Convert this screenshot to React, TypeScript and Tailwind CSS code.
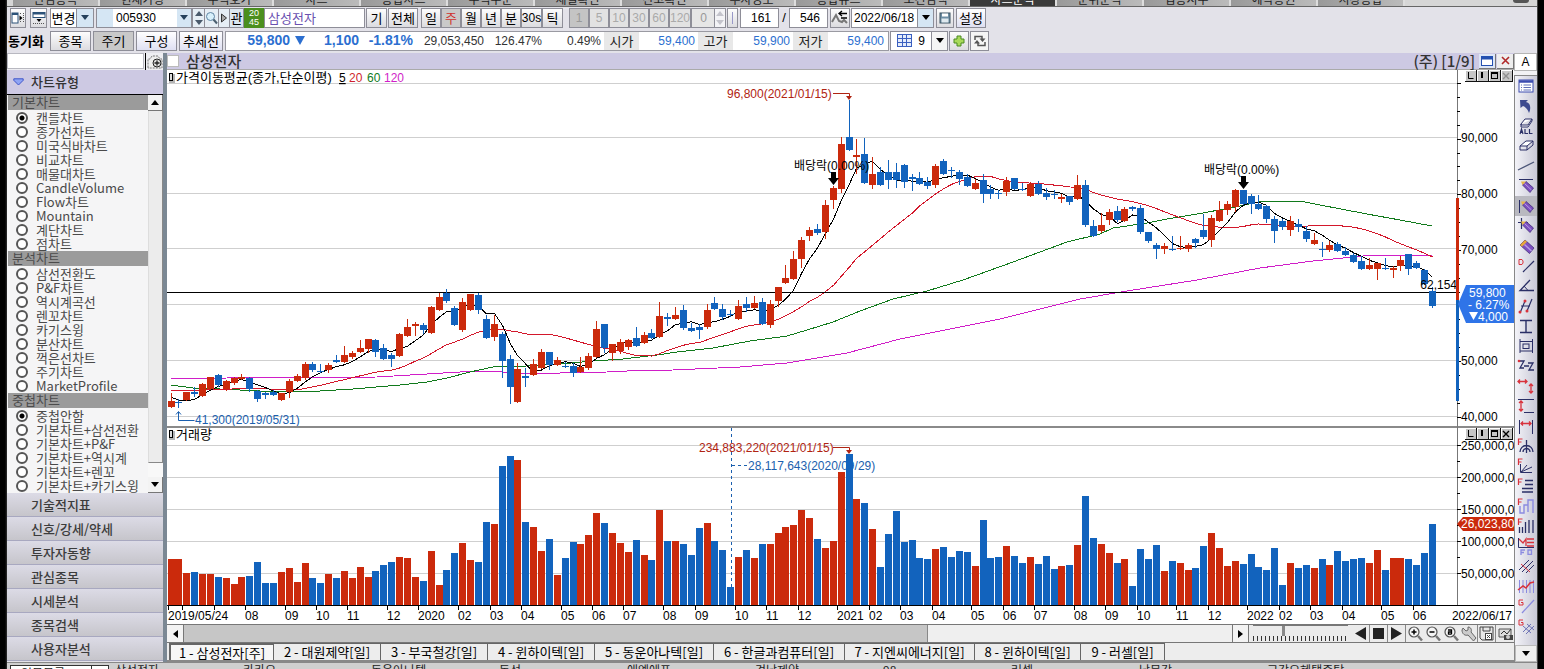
import React from "react";

type Candle = [number, number, number, number, string];

const UI = "font-['Liberation_Sans','Noto_Sans_CJK_KR',sans-serif]";
const KR = "font-['Noto_Sans_CJK_KR',sans-serif]";

const RED = "#cb2a0c";
const BLUE = "#1263bd";

/* high, body top, body bottom, low, direction (u = up, d = down) */
const candles: Candle[] = [
  [393, 401, 407, 407, "u"], [399, 402, 403, 407, "d"], [392, 392, 400, 400, "u"], [387, 392, 394, 396, "d"],
  [383, 384, 396, 396, "u"], [377, 377, 389, 389, "u"], [374, 375, 385, 386, "d"], [380, 381, 389, 390, "u"],
  [377, 378, 383, 384, "u"], [374, 377, 379, 379, "u"], [377, 378, 389, 391, "d"], [390, 391, 399, 401, "d"],
  [392, 393, 395, 398, "d"], [390, 392, 395, 395, "d"], [393, 393, 400, 400, "u"], [379, 381, 392, 397, "u"],
  [374, 376, 381, 381, "u"], [362, 364, 378, 379, "u"], [362, 364, 370, 371, "d"], [364, 371, 372, 372, "d"],
  [363, 365, 370, 372, "u"], [355, 360, 362, 362, "d"], [346, 355, 362, 362, "u"], [351, 353, 357, 358, "u"],
  [340, 348, 352, 352, "u"], [339, 339, 349, 352, "u"], [339, 340, 352, 356, "d"], [344, 348, 359, 359, "d"],
  [353, 355, 359, 366, "d"], [333, 334, 356, 356, "u"], [319, 327, 336, 336, "u"], [322, 324, 326, 335, "u"],
  [323, 325, 330, 333, "d"], [306, 307, 333, 333, "u"], [293, 297, 310, 310, "u"], [289, 293, 301, 302, "d"],
  [306, 308, 325, 325, "d"], [298, 302, 330, 331, "u"], [294, 294, 310, 310, "u"], [293, 295, 310, 313, "d"],
  [315, 319, 338, 338, "d"], [315, 324, 337, 340, "u"], [332, 334, 361, 377, "d"], [355, 359, 387, 403, "d"],
  [363, 369, 402, 402, "u"], [368, 376, 378, 386, "d"], [359, 364, 375, 375, "u"], [349, 352, 368, 368, "u"],
  [352, 352, 365, 369, "d"], [357, 360, 365, 365, "u"], [362, 366, 367, 367, "d"], [363, 366, 373, 376, "d"],
  [357, 367, 372, 372, "u"], [353, 356, 368, 369, "u"], [321, 329, 357, 357, "u"], [324, 324, 348, 352, "d"],
  [344, 344, 353, 360, "u"], [339, 342, 351, 353, "u"], [339, 340, 347, 349, "u"], [327, 338, 346, 346, "d"],
  [332, 335, 343, 343, "u"], [329, 333, 338, 338, "d"], [302, 316, 337, 337, "u"], [313, 317, 319, 325, "d"],
  [307, 315, 319, 319, "u"], [305, 310, 328, 329, "d"], [323, 328, 331, 331, "d"], [324, 327, 330, 338, "d"],
  [304, 310, 327, 328, "u"], [297, 303, 309, 309, "d"], [304, 309, 317, 319, "d"], [310, 314, 315, 316, "d"],
  [300, 306, 319, 319, "u"], [297, 304, 308, 311, "d"], [296, 303, 308, 308, "u"], [298, 302, 324, 324, "d"],
  [300, 304, 325, 327, "u"], [287, 287, 301, 306, "u"], [265, 278, 283, 283, "u"], [251, 259, 279, 279, "u"],
  [237, 240, 259, 267, "u"], [227, 230, 236, 240, "u"], [224, 229, 233, 234, "d"], [200, 205, 232, 238, "u"],
  [186, 188, 200, 208, "u"], [137, 144, 189, 192, "u"], [100, 137, 150, 150, "d"], [139, 155, 157, 173, "u"],
  [138, 154, 183, 183, "d"], [157, 174, 185, 188, "u"], [167, 172, 185, 185, "d"], [160, 172, 180, 188, "d"],
  [163, 172, 180, 187, "d"], [164, 165, 182, 187, "d"], [174, 177, 179, 190, "d"], [172, 178, 184, 184, "d"],
  [177, 182, 186, 188, "d"], [164, 166, 185, 187, "u"], [159, 161, 174, 174, "d"], [167, 170, 171, 177, "d"],
  [170, 172, 179, 184, "d"], [174, 177, 186, 186, "d"], [179, 183, 189, 189, "u"], [174, 180, 194, 202, "d"],
  [185, 189, 194, 198, "d"], [190, 193, 194, 198, "d"], [177, 181, 192, 195, "u"], [178, 178, 189, 189, "d"],
  [183, 189, 190, 190, "d"], [182, 184, 196, 196, "u"], [181, 184, 194, 194, "d"], [188, 193, 197, 199, "d"],
  [190, 194, 195, 198, "d"], [194, 197, 199, 202, "u"], [196, 196, 202, 204, "d"], [175, 185, 199, 199, "u"],
  [180, 185, 225, 226, "d"], [220, 226, 236, 236, "d"], [213, 225, 231, 232, "u"], [209, 212, 220, 224, "u"],
  [206, 211, 220, 221, "d"], [207, 209, 221, 221, "u"], [206, 207, 209, 210, "d"], [205, 208, 232, 233, "d"],
  [232, 232, 241, 242, "d"], [243, 245, 249, 258, "d"], [243, 246, 249, 253, "u"], [236, 249, 250, 250, "d"],
  [236, 248, 249, 249, "u"], [243, 245, 249, 251, "u"], [238, 239, 243, 247, "d"], [214, 230, 237, 238, "d"],
  [215, 218, 240, 246, "u"], [201, 210, 221, 221, "u"], [201, 204, 210, 214, "u"], [189, 190, 207, 211, "u"],
  [190, 190, 204, 204, "d"], [194, 196, 204, 213, "d"], [195, 204, 209, 209, "d"], [205, 206, 219, 222, "d"],
  [216, 219, 231, 242, "d"], [219, 221, 227, 229, "d"], [216, 221, 230, 235, "u"], [219, 224, 227, 231, "d"],
  [226, 231, 239, 241, "d"], [233, 240, 244, 244, "u"], [242, 249, 250, 256, "d"], [241, 245, 250, 251, "u"],
  [242, 244, 251, 251, "d"], [247, 251, 255, 255, "d"], [253, 255, 262, 262, "d"], [256, 261, 269, 269, "d"],
  [258, 265, 269, 269, "u"], [263, 263, 269, 279, "u"], [258, 268, 269, 269, "d"], [266, 268, 270, 277, "u"],
  [256, 260, 266, 270, "u"], [254, 254, 269, 274, "d"], [261, 263, 268, 268, "d"], [269, 270, 284, 284, "d"],
  [287, 291, 306, 307, "d"],
];

/* bar heights in thirds of a pixel, r = rising week, b = falling week */
const volumes =
  "137r 137r 96r 99b 93r 93r 84b 81r 63r 84r 87b 128b 66b 66b 99r 111r 69r 126r 81b 66b 93r 81b 102r 81r 114r 84r 102b 120b 128b 144r 141r 84r 72b 162r 60r 105b 155b 185r 135r 128b 249b 243r 417b 447b 435r 249b 234r 162r 198b 90r 141b 189b 183r 210r 276r 246b 216r 186r 159r 195b 150r 135b 285r 192b 192r 183b 150b 231b 246r 192b 165b 54b 144r 165b 141r 183b 183r 216r 234r 240r 285r 261r 198b 171r 192r 399r 453b 318r 306b 228r 114b 213b 282b 189b 195b 141b 138b 168r 174b 144b 162b 159b 117r 255b 141b 144b 177r 147b 126b 144r 123b 147b 108b 117r 120b 180r 327b 201b 183r 156r 126b 138r 57b 168b 138b 180b 102r 132b 126r 105r 111b 177b 216r 171r 117r 132r 123b 153b 114b 105b 171b 60b 126r 111b 120b 111r 138b 120r 162b 132b 138b 141b 126r 165r 105b 141r 141r 138b 120b 156b 243b"
    .split(" ")
    .map((v) => ({ h: Math.round(parseInt(v, 10) / 3), up: v.endsWith("r") }));

const cx = (i: number) => Math.round(170.5 + i * 7.884);
const closes = candles.map((c) => (c[4] === "u" ? c[1] : c[2]));
const average = (n: number, lead: string) =>
  lead +
  " " +
  closes
    .map((_, i) => (i < n - 1 ? "" : `${cx(i) + 0.5},${(closes.slice(i - n + 1, i + 1).reduce((a, b) => a + b, 0) / n).toFixed(1)}`))
    .filter(Boolean)
    .join(" ");

const months: [number, string][] = [
  [245, "08"], [285, "09"], [316, "10"], [347, "11"], [387, "12"], [418, "2020"], [458, "02"], [490, "03"], [521, "04"],
  [561, "05"], [592, "06"], [623, "07"], [663, "08"], [695, "09"], [735, "10"], [766, "11"], [798, "12"], [837, "2021"],
  [869, "02"], [900, "03"], [932, "04"], [971, "05"], [1003, "06"], [1034, "07"], [1074, "08"], [1105, "09"],
  [1137, "10"], [1176, "11"], [1208, "12"], [1247, "2022"], [1279, "02"], [1310, "03"], [1342, "04"], [1381, "05"], [1413, "06"],
];

function PaneButtons({ y, dim }: { y: number; dim?: boolean }) {
  return (
    <g>
      {[0, 1, 2, 3].map((k) => (
        <g key={k}>
          <rect x={1465 + k * 12} y={y} width="12" height="12" fill="#111" />
          <rect x={1465 + k * 12} y={y} width="11" height="11" fill="#fff" />
          <rect x={1466 + k * 12} y={y + 1} width="10" height="10" fill="#c6c6c6" />
        </g>
      ))}
      <path d={`M1468.5 ${y + 2}v6.5h5`} fill="none" stroke="#000" />
      <path d={`M1482 ${y + 2}v6`} stroke="#000" strokeWidth="2" />
      <rect x="1491.5" y={y + 3.5} width="6" height="5" fill="none" stroke="#000" />
      <path d={`M1491 ${y + 3}h7`} stroke="#000" strokeWidth="2" />
      <path d={`M1503 ${y + 3}l6 6m0-6l-6 6`} stroke={dim ? "#8f8f8f" : "#000"} strokeWidth="1.4" />
    </g>
  );
}

function Chart() {
  const prices: [number, string][] = [[137, "90,000"], [193, "80,000"], [249, "70,000"], [360, "50,000"], [416, "40,000"]];
  const vols: [number, string][] = [[445, "250,000,000"], [477, "200,000,000"], [509, "150,000,000"], [541, "100,000,000"], [573, "50,000,000"]];
  return (
    <svg viewBox="167 70 1347 554" className={`block h-full w-full bg-white text-[12px] ${UI}`} role="img" aria-label="삼성전자 주봉 차트">
      <g stroke="#cfcfcf" shapeRendering="crispEdges">
        {[83, 137, 193, 248, 304, 360, 416, 445, 477, 509, 541, 573].map((y) => (
          <path key={y} d={`M167 ${y}.5H1457`} />
        ))}
      </g>
      <g fill="none" shapeRendering="crispEdges">
        <polyline stroke="#d01ec8" points="171,379 227,378 377,377 460,372 490,371 513,373 560,373 607,372 627,371 673,370 740,367 787,363 817,358 847,353 900,339 940,331 1000,319 1040,309 1080,299 1127,291 1197,280 1260,268 1313,261 1363,256 1407,255 1432,255" />
        <polyline stroke="#117a1c" points="171,385 193,388 220,389 260,391 303,392 353,389 400,385 427,382 447,378 470,372 493,367 527,366 560,364 593,361 623,359 657,355 677,352 713,348 750,341 787,336 807,330 833,322 860,311 893,299 927,291 963,280 1013,262 1067,242 1100,234 1113,228 1147,223 1167,219 1203,213 1240,206 1263,201 1300,201 1320,205 1367,214 1400,220 1432,226" />
        <polyline stroke="#d3172b" points={average(20, "171,390 200,390 232,389 257,388 280,390 302,389")} />
        <polyline stroke="#000" points={average(5, "171,397 178,400 187,401 195,399")} />
        <path d="M167 292.5H1457" stroke="#000" />
      </g>
      <text x="195" y="424" fill="#1b5fae">41,300(2019/05/31)</text>
      <path d="M178.500 412v8.500h16M176 414.500l2.500-3 2.500 3" fill="none" stroke="#1b5fae" />
      <g shapeRendering="crispEdges">
        {candles.map(([hi, top, bot, lo, dir], i) => (
          <g key={i} fill={dir === "u" ? RED : BLUE}>
            <rect x={cx(i)} y={hi} width="1" height={lo - hi + 1} />
            <rect x={cx(i) - 3} y={top} width="7" height={Math.max(1, bot - top)} />
          </g>
        ))}
      </g>
      <text x="727" y="98" fill="#b02412">96,800(2021/01/15)</text>
      <path d="M833 93.500h16.500v4" fill="none" stroke="#b02412" />
      <path d="M846 96h6l-3 4z" fill="#b02412" />
      <text x="794" y="170">배당락(0.00%)</text>
      <path d="M831 172h5v6h3l-5.500 7-5.500-7h3z" />
      <text x="1204" y="174">배당락(0.00%)</text>
      <path d="M1241 176h5v6h3l-5.500 7-5.500-7h3z" />
      <text x="1457" y="289" textAnchor="end">62,154</text>

      <rect x="169" y="74" width="6" height="9" fill="#b5b5b5" />
      <rect x="169.500" y="73.500" width="3" height="7" fill="#ddd" stroke="#000" />
      <text x="176" y="82" className="text-[13px]">가격이동평균(종가,단순이평)</text>
      <text x="339" y="82" textDecoration="underline">5</text>
      <text x="349" y="82" fill="#cf1f2d">20</text>
      <text x="367" y="82" fill="#117a1c">60</text>
      <text x="384" y="82" fill="#d01ec8">120</text>

      <path d="M167 427H1514" stroke="#8a8a8a" strokeWidth="2" />
      <rect x="169" y="431" width="6" height="9" fill="#b5b5b5" />
      <rect x="169.500" y="430.500" width="3" height="7" fill="#ddd" stroke="#000" />
      <text x="176" y="439" className="text-[13px]">거래량</text>
      <path d="M731.500 428V587M732 465.500h15" fill="none" stroke="#1b5fae" strokeDasharray="3 3" shapeRendering="crispEdges" />
      <text x="699" y="452" fill="#b02412">234,883,220(2021/01/15)</text>
      <text x="748" y="470" fill="#1b5fae">28,117,643(2020/09/29)</text>
      <path d="M833 447.500h16.500v4" fill="none" stroke="#b02412" />
      <path d="M846 450h6l-3 4z" fill="#b02412" />
      <g shapeRendering="crispEdges">
        {volumes.map((v, i) => (
          <rect key={i} x={cx(i) - 3} y={605 - v.h} width="7" height={v.h} fill={v.up ? RED : BLUE} />
        ))}
      </g>

      <g stroke="#000" shapeRendering="crispEdges">
        <path d="M167 605.500H1514" />
        {[168, 182, 214, ...months.map((m) => m[0])].map((x) => (
          <path key={x} d={`M${x}.5 605v5`} />
        ))}
        <path d="M1457.500 70V605" stroke="#777" />
        {Array.from({ length: 25 }, (_, k) => 83 + Math.round(k * 13.9)).map((y, k) => (
          <path key={y} d={`M1457 ${y}.5h${k % 4 === 0 ? 4 : 3}`} />
        ))}
        {[445, 461, 477, 493, 509, 525, 541, 557, 573].map((y, k) => (
          <path key={y} d={`M1457 ${y}.5h${k % 2 ? 3 : 4}`} />
        ))}
      </g>
      <rect x="1456" y="198" width="3" height="102" fill={RED} />
      <rect x="1456" y="300" width="3" height="101" fill={BLUE} />
      <text x="168" y="620">2019/05/24</text>
      {months.map(([x, t]) => (
        <text key={x} x={x} y="620">{t}</text>
      ))}
      <text x="1512" y="620" textAnchor="end">2022/06/17</text>
      {prices.map(([y, t]) => (
        <text key={t} x="1461" y={y + 5}>{t}</text>
      ))}
      {vols.map(([y, t]) => (
        <text key={t} x="1461" y={y + 5}>{t}</text>
      ))}
      <path d="M1458 304l8-19h48v38h-48z" fill="#2f74e8" />
      <g fill="#fff">
        <text x="1469" y="297">59,800</text>
        <text x="1468" y="309">- 6.27%</text>
        <path d="M1469 312h9l-4.500 8z" />
        <text x="1478" y="321">4,000</text>
      </g>
      <path d="M1457 524l6-7h51v14h-51z" fill={RED} />
      <text x="1461" y="528" fill="#fff">26,023,80</text>
      <PaneButtons y={70} dim />
      <PaneButtons y={428} />
    </svg>
  );
}

/* ---------- top controls ---------- */

const BTN = "flex h-[20px] shrink-0 items-center justify-center border border-[#8e8e98] text-black";
const RAISED = "bg-linear-to-b from-[#fdfdfd] to-[#dcdce0]";
const PRESSED = "bg-[#c9c9c9]";

function Caret({ up }: { up?: boolean }) {
  return (
    <svg width="8" height="5" viewBox="0 0 8 5" aria-hidden="true">
      <path d={up ? "M0 5h8L4 0z" : "M0 0h8L4 5z"} fill="currentColor" />
    </svg>
  );
}

function Btn({ children, w, cls = RAISED, label }: { children: React.ReactNode; w: string; cls?: string; label?: string }) {
  return (
    <button type="button" aria-label={label} className={`${BTN} ${w} ${cls}`}>
      {children}
    </button>
  );
}

function RowOne() {
  return (
    <div className={`flex h-[21px] shrink-0 items-center pl-[3px] text-[13px] ${KR}`}>
      <Btn w="w-[16px]" label="왼쪽 패널">
        <svg width="14" height="14" viewBox="0 0 14 14"><rect x="1" y="2" width="6" height="10" fill="#fff" stroke="#2d5379" /><path d="M1 3h6" stroke="#2d5379" strokeWidth="2" /><path d="M9.500 2v2m0 6v2m3-10v10" stroke="#555" strokeDasharray="1 1" /><path d="M8.500 4.500v5l3-2.500z" fill="#000" /></svg>
      </Btn>
      <Btn w="w-[17px] ml-[4px]" label="위쪽 패널">
        <svg width="14" height="14" viewBox="0 0 14 14"><rect x="1" y="1.500" width="12" height="5" fill="#fff" stroke="#2d5379" /><path d="M1 2.500h12" stroke="#2d5379" strokeWidth="2" /><path d="M1 12.500h12" stroke="#555" strokeDasharray="1 1" /><path d="M4.500 8h5l-2.500 3z" fill="#000" /></svg>
      </Btn>
      <Btn w="w-[27px] ml-[3px]" cls="bg-white">변경</Btn>
      <Btn w="w-[17px]" cls="bg-[#d5e6f4] !text-[#24405c] border-l-0" label="변경 목록"><Caret /></Btn>
      <span className="ml-[2px] h-[20px] w-[17px] shrink-0 border border-r-0 border-[#8e8e98] bg-[#d5e6f4]" />
      <input aria-label="종목코드" defaultValue="005930" className={`h-[20px] w-[64px] shrink-0 border border-x-0 border-[#8e8e98] bg-white pl-[3px] text-[12px] ${UI}`} />
      <Btn w="w-[15px]" cls="bg-[#d5e6f4] !text-[#24405c] border-l-0" label="종목 목록"><Caret /></Btn>
      <Btn w="w-[13px] flex-col gap-[4px]" cls="bg-[#e6eef5] !text-[#4a5a6c]" label="종목 이동"><Caret up /><Caret /></Btn>
      <Btn w="w-[14px]" cls="bg-[#e6eef5] border-l-0" label="검색">
        <svg width="13" height="14" viewBox="0 0 13 14"><circle cx="5.500" cy="5.500" r="4" fill="#d8f0fb" stroke="#5d84a3" /><path d="M8.500 8.500l3.500 4" stroke="#4c6070" strokeWidth="2" /></svg>
      </Btn>
      <Btn w="w-[11px]" cls="bg-[#e6eef5] border-l-0" label="다음"><svg width="6" height="10" viewBox="0 0 6 10"><path d="M.5 1v8l5-4z" fill="#aaa" stroke="#333" /></svg></Btn>
      <Btn w="w-[14px]" cls="bg-[#dce7f0] border-l-0">관</Btn>
      <span className="flex h-[20px] w-[20px] shrink-0 flex-col items-center justify-center bg-[#4b8f1e] font-['Liberation_Sans',sans-serif] text-[9px] leading-[9px] text-white"><b className="font-normal">20</b><b className="font-normal">45</b></span>
      <input aria-label="종목명" defaultValue="삼성전자" className="h-[20px] w-[101px] shrink-0 border border-[#8e8e98] bg-white pl-[3px] text-[13px] text-[#6a50b0]" />
      <Btn w="w-[21px] ml-[1px]">기</Btn>
      <Btn w="w-[30px] ml-[1px]">전체</Btn>
      <div className="ml-[3px] flex shrink-0">
        <Btn w="w-[20px]">일</Btn>
        <Btn w="w-[20px]" cls="bg-[#c9c9c9] !text-[#d0302c]">주</Btn>
        <Btn w="w-[20px]">월</Btn>
        <Btn w="w-[20px]">년</Btn>
        <Btn w="w-[20px]">분</Btn>
        <Btn w="w-[21px]"><span className={`text-[12px] ${UI}`}>30s</span></Btn>
        <Btn w="w-[21px]">틱</Btn>
      </div>
      <div className={`ml-[6px] flex shrink-0 text-[12px] ${UI}`}>
        <Btn w="w-[20px]" cls="bg-[#c4c4c4] !text-[#999]">1</Btn>
        <Btn w="w-[20px]" cls="bg-[#e2e2e2] !text-[#aaa]">5</Btn>
        <Btn w="w-[20px]" cls="bg-[#e2e2e2] !text-[#aaa]">10</Btn>
        <Btn w="w-[20px]" cls="bg-[#e2e2e2] !text-[#aaa]">30</Btn>
        <Btn w="w-[20px]" cls="bg-[#e2e2e2] !text-[#aaa]">60</Btn>
        <Btn w="w-[22px]" cls="bg-[#e2e2e2] !text-[#aaa]">120</Btn>
        <input aria-label="분 간격" disabled defaultValue="0" className="h-[20px] w-[24px] border border-[#8e8e98] bg-[#e6e6e6] pr-[7px] text-right text-[#999]" />
        <Btn w="w-[11px]" cls="bg-[#f3f3f6] !text-[#c4c4cc] flex-col gap-[4px] border-l-0" label="간격 조절"><Caret up /><Caret /></Btn>
        <Btn w="w-[11px] ml-[1px]" label="구분"><span className="h-[12px] w-px bg-[#9898c8]" /></Btn>
      </div>
      <input aria-label="표시 봉 수" defaultValue="161" className={`ml-[2px] h-[20px] w-[39px] shrink-0 border border-[#8e8e98] bg-white pr-[7px] text-right text-[12px] ${UI}`} />
      <span className={`w-[10px] shrink-0 text-center ${UI}`}>/</span>
      <input aria-label="전체 봉 수" defaultValue="546" className={`h-[20px] w-[39px] shrink-0 border border-[#8e8e98] bg-white pr-[7px] text-right text-[12px] ${UI}`} />
      <Btn w="w-[20px] ml-[2px]" label="추세 비교">
        <svg width="18" height="16" viewBox="0 0 18 16"><path d="M1 12l4-7 3 6 3 1 2-2 3 3" fill="none" stroke="#777" strokeWidth="2" /><path d="M16 3.500H8m3-2.500L8 3.500 11 6M10 8h6" fill="none" stroke="#000" strokeWidth="1.300" /></svg>
      </Btn>
      <input aria-label="기준일" defaultValue="2022/06/18" className={`ml-px h-[20px] w-[67px] shrink-0 border border-[#8e8e98] bg-white pl-[2px] text-[12px] ${UI}`} />
      <Btn w="w-[16px]" cls="bg-[#d5e6f4] border-l-0" label="날짜 선택"><Caret /></Btn>
      <Btn w="w-[18px] ml-[2px]" label="저장">
        <svg width="12" height="12" viewBox="0 0 12 12"><rect x="1" y="1" width="10" height="10" fill="#6e8fa5" stroke="#3d5360" /><rect x="3" y="1.500" width="6" height="3" fill="#fff" /><rect x="2.500" y="6.500" width="7" height="4" fill="#dfe9ee" /></svg>
      </Btn>
      <Btn w="w-[30px] ml-[2px]" cls="bg-linear-to-b from-white to-[#dfe0f2]">설정</Btn>
    </div>
  );
}

function RowTwo() {
  const label = "flex h-[18px] items-center justify-center bg-[#e8e8e8] w-[35px] text-[13px] text-[#222]";
  const strong = "text-[14px] font-bold text-[#2c6fd0]";
  return (
    <div className={`mt-[2px] flex h-[21px] shrink-0 items-center pl-px text-[13px] ${KR}`}>
      <span className="w-[42px] shrink-0 font-bold">동기화</span>
      <Btn w="w-[41px]">종목</Btn>
      <Btn w="w-[41px] ml-[2px]" cls={PRESSED}>주기</Btn>
      <Btn w="w-[41px] ml-[2px]" cls="bg-linear-to-b from-white to-[#dfe0f2]">구성</Btn>
      <Btn w="w-[44px] ml-[2px]" cls="bg-linear-to-b from-white to-[#dfe0f2]">추세선</Btn>
      <div className="ml-[2px] flex h-[20px] w-[664px] shrink-0 items-center border border-[#9a9aa2] bg-white text-[12px] text-[#333]">
        <span className={`flex w-[79px] items-center justify-end gap-[5px] ${strong} ${UI}`}>59,800
          <svg width="10" height="9" viewBox="0 0 10 9"><path d="M0 0h10L5 9z" fill="#2c6fd0" /></svg>
        </span>
        <span className={`w-[54px] text-right ${strong} ${UI}`}>1,100</span>
        <span className={`w-[54px] text-right ${strong} ${UI}`}>-1.81%</span>
        <span className={`w-[71px] text-right ${UI}`}>29,053,450</span>
        <span className={`w-[58px] text-right ${UI}`}>126.47%</span>
        <span className={`w-[59px] text-right ${UI}`}>0.49%</span>
        <span className={`ml-[3px] ${label}`}>시가</span>
        <span className={`w-[56px] text-right text-[#2c6fd0] ${UI}`}>59,400</span>
        <span className={`ml-[3px] ${label}`}>고가</span>
        <span className={`w-[57px] text-right text-[#2c6fd0] ${UI}`}>59,900</span>
        <span className={`ml-[3px] ${label}`}>저가</span>
        <span className={`w-[56px] text-right text-[#2c6fd0] ${UI}`}>59,400</span>
      </div>
      <button type="button" className={`${BTN} ml-px w-[42px] gap-[6px] bg-white`}>
        <svg width="15" height="14" viewBox="0 0 15 14"><rect x=".5" y=".5" width="14" height="12" fill="#e4ecfb" stroke="#3a5fc0" /><path d="M5.500 0v13m4-13v13M0 4.500h15M0 8.500h15" stroke="#3a5fc0" /></svg>
        <span className={`text-[12px] ${UI}`}>9</span>
      </button>
      <Btn w="w-[16px]" cls="bg-[#f5f5f5] border-l-0" label="분할 목록"><Caret /></Btn>
      <Btn w="w-[20px] ml-px" label="추가">
        <svg width="12" height="12" viewBox="0 0 12 12"><path d="M4 1h4v3h3v4H8v3H4V8H1V4h3z" fill="#a8da5a" stroke="#4a8a20" /></svg>
      </Btn>
      <Btn w="w-[19px] ml-px" cls="bg-[#f5f5f5]" label="새로고침">
        <svg width="14" height="14" viewBox="0 0 14 14"><path d="M2 6V2.500h7V5M12 8v3.500H5V9" fill="none" stroke="#555" strokeWidth="1.500" /><path d="M6.500 4.500h6L9.500 8zM1 9.500h6L4 6z" fill="#555" /></svg>
      </Btn>
    </div>
  );
}

/* ---------- left panel ---------- */

const groups = [
  { title: "기본차트", picked: 0, items: ["캔들차트", "종가선차트", "미국식바차트", "비교차트", "매물대차트", "CandleVolume", "Flow차트", "Mountain", "계단차트", "점차트"] },
  { title: "분석차트", picked: -1, items: ["삼선전환도", "P&F차트", "역시계곡선", "렌꼬차트", "카기스윙", "분산차트", "꺽은선차트", "주기차트", "MarketProfile"] },
  { title: "중첩차트", picked: 0, items: ["중첩안함", "기본차트+삼선전환", "기본차트+P&F", "기본차트+역시계", "기본차트+렌꼬", "기본차트+카기스윙"] },
];

function Sidebar() {
  return (
    <aside className={`flex w-[156px] shrink-0 flex-col text-[13px] ${KR}`}>
      <div className="flex h-[17px] shrink-0 bg-[#eeeef2]">
        <input aria-label="차트 검색" className="h-[16px] w-[137px] border border-[#b8b8c0] bg-white" />
        <span className="ml-px h-[17px] w-px bg-black" />
        <button type="button" aria-label="찾기" className="flex flex-1 items-center justify-center">
          <svg width="16" height="14" viewBox="0 0 16 14"><path d="M1 12.500V4h2l2-3h6l2 3h2v9H1z" fill="#eee" stroke="#777" strokeDasharray="2 1" /><circle cx="10" cy="8" r="4" fill="#ddd" stroke="#222" /><path d="M7.500 8h5M10 5.500v5" stroke="#222" strokeWidth="1.300" /></svg>
        </button>
      </div>
      <button type="button" className="flex h-[24px] shrink-0 items-center gap-[7px] bg-[#cdc9e3] pl-[6px] font-medium text-[#333]">
        <svg width="11" height="8" viewBox="0 0 11 8"><path d="M.8.800h9.400v1.500L5.500 7 .8 2.300z" fill="#8fa4f4" stroke="#3f55c8" /></svg>
        차트유형
      </button>
      <div className="flex shrink-0 border-t border-black bg-[#f5f5f6]">
        <div className="min-w-0 flex-1 pl-px text-[#4a4a4a]">
          {groups.map((g) => (
            <fieldset key={g.title} className="block">
              <legend className="mb-px h-[15px] w-full bg-[#9b9b9b] pl-[4px] leading-[14px] text-[#4c4c4c]">{g.title}</legend>
              {g.items.map((t, i) => (
                <label key={t} className="flex h-[14px] items-center whitespace-nowrap leading-[12px]">
                  <input type="radio" name={g.title} defaultChecked={i === g.picked} className="ml-[8px] mr-[8px] h-[12px] w-[12px] shrink-0 appearance-none rounded-full border-2 border-[#555] bg-white checked:bg-[radial-gradient(circle,#000_0_2px,#fff_3px)]" />
                  {t}
                </label>
              ))}
            </fieldset>
          ))}
        </div>
        <div className="flex w-[15px] flex-col">
          <button type="button" aria-label="위로" className="flex h-[16px] items-center justify-center border-b border-r border-[#777] bg-[#f3f3f3]"><Caret up /></button>
          <div className="flex-1 border-b border-l border-r border-[#888] border-l-[#ddd] bg-[#ececec]" />
          <div className="h-[14px] bg-[#f8f8f8]" />
          <button type="button" aria-label="아래로" className="flex h-[16px] items-center justify-center border-b border-r border-[#777] bg-[#f3f3f3]"><Caret /></button>
        </div>
      </div>
      {["기술적지표", "신호/강세/약세", "투자자동향", "관심종목", "시세분석", "종목검색", "사용자분석"].map((t) => (
        <button key={t} type="button" className="flex h-[24px] shrink-0 items-center border-b border-[#a8a8c0] bg-linear-to-b from-[#dcdbe6] to-[#c6c5cb] pl-[24px] font-medium text-[#3c3c3c]">
          {t}
        </button>
      ))}
    </aside>
  );
}

/* ---------- drawing tools ---------- */

const N = "#2a2f66";
const R = "#d8323c";
const P = "#8b8be0";
const pencil = (
  <g>
    <path d="M5.500 8l3.500-3.500 7.500 6.500-3.500 4.500z" fill="#7d4fc0" stroke="#42307a" strokeWidth=".8" />
    <path d="M7.500 6.500l7 6.500" stroke="#b79be6" />
    <path d="M4 4.500l5 0-3.500 3.500z" fill="#e8b84a" />
  </g>
);
const F = <path d="M1.500 8V2h4M1.500 5h3" fill="none" stroke={R} strokeWidth="1.200" />;
const G = <path d="M6 3H2v5h4V5.500H4" fill="none" stroke={R} />;

const tools: [string, React.ReactNode][] = [
  ["목록", <><rect x="2" y="3" width="14" height="12" fill="#fff" stroke="#3c4db0" /><path d="M2 4.500h14" stroke="#3c4db0" strokeWidth="2.500" /><path d="M4 8h1m1.500 0H14M4 10.500h1m1.500 0H14M4 13h1m1.500 0H14" stroke="#6070b8" /></>],
  ["되돌리기", <path d="M3 3h8L9 5c5 1 5 7 3 11-1-3-3-6-6-7L3.500 11z" fill="#3d4a8e" />],
  ["모두 지우기", <><path d="M4 7l4-5h7l-4 6H4zM4 7v3h7l4-6V2" fill="#fff" stroke={N} /><path d="M3 17l1.500-5L6 17m-2.500-1.500h2M8 12v4.500h3M12.500 12v4.500h3" fill="none" stroke={N} strokeWidth="1.200" /></>],
  ["지우기", <><path d="M3 9l6-5h7l-6 5z" fill="#fff" stroke={N} /><path d="M3 9v4h7l6-5V4M10 9v4" fill="none" stroke={N} /></>],
  ["추세선", <path d="M1 13L17 5" stroke="#4b5577" strokeWidth="1.300" />],
  ["수평선", <><path d="M2 2.500h14" stroke={N} />{pencil}</>],
  ["수직선", <><path d="M2.500 3v13" stroke={N} />{pencil}</>],
  ["십자선", <><path d="M4.500 1v11M1 5.500h10" stroke={N} strokeWidth="1.200" />{pencil}</>],
  ["채우기", <><path d="M3 8l5-5 9 8-4.500 5.500z" fill="#7d4fc0" stroke="#42307a" strokeWidth=".8" /><path d="M3 8l5-5 2 1.800-5 5z" fill="#e8a83a" /><path d="M7.500 7.500l7 6.500" stroke="#b79be6" strokeWidth="1.500" /></>],
  ["각도선 D", <><path d="M2 2.500h3l1 1.500v2L5 7.500H2z" fill="none" stroke={R} /><path d="M6 15L17 4" stroke={N} strokeWidth="1.200" /></>],
  ["각도", <><path d="M13 3L3 13.500h14" fill="none" stroke={N} strokeWidth="1.300" /><path d="M7 9l4 4.500" stroke={N} /></>],
  ["채널", <><path d="M3 16L8 4m2 10L15 2M4 9l9 0" stroke={N} strokeWidth="1.200" /><circle cx="3" cy="15" r="1.500" fill={R} /><circle cx="8" cy="4" r="1.500" fill={R} /><circle cx="10" cy="14" r="1.500" fill={R} /></>],
  ["구간", <path d="M3 3.500h12M3 15.500h12M9 4v11" stroke={N} strokeWidth="1.400" />],
  ["사각형", <><path d="M3 2v14M15.500 2v14M3 4.500h12M3 14h12" stroke={N} /><rect x="6" y="7" width="6" height="4.500" fill="none" stroke={N} /></>],
  ["지그재그", <><path d="M2 4h5L3 11h4M11 6h5l-4 7h5M7 9h5" fill="none" stroke={N} strokeWidth="1.300" /><circle cx="2" cy="4" r="1.300" fill={R} /></>],
  ["이동", <><path d="M1 4.500h9M3 2.500l-2 2 2 2M8 2.500l2 2-2 2M14 7v9M12 9l2-2 2 2M12 14l2 2 2-2" fill="none" stroke={R} strokeWidth="1.300" /></>],
  ["세로 구간", <><path d="M1 2.500h16M7 15.500h10" stroke={N} /><path d="M4 4v10M2 6l2-2 2 2M2 12l2 2 2-2" fill="none" stroke={R} strokeWidth="1.300" /></>],
  ["가로 구간", <><path d="M2.500 3v14M15.500 3v14" stroke={N} /><path d="M4 6.500h10M6 4.500l-2 2 2 2M12 4.500l2 2-2 2" fill="none" stroke={R} strokeWidth="1.300" /></>],
  ["피보나치 호", <>{F}<path d="M3 15a6.500 6.500 0 0113 0M6 15a3.500 3.500 0 017 0M9.500 3v13" fill="none" stroke={N} strokeWidth="1.300" /></>],
  ["피보나치 팬", <>{F}<path d="M3.500 7v8.500H15M4 15l6-7M4 15l11-5" fill="none" stroke={N} /></>],
  ["피보나치 되돌림", <>{F}<path d="M8 3.500h8M8 7.500h8M5 11.500h11M5 15h11" stroke={N} strokeWidth="1.400" /></>],
  ["피보나치 파동", <>{F}<path d="M3 9v7h4V8h4v7M11 12V3h5v13" fill="none" stroke={P} strokeWidth="1.400" /></>],
  ["피보나치 시간대", <>{F}<path d="M2.500 10v6M5.500 10v6M8.500 5v11M12 3v13M16 3v13" stroke={N} strokeWidth="1.300" /></>],
  ["속도선", <><path d="M2 2l4 4 3-4v7M10 2h7M10 5.500h7M10 9h7" fill="none" stroke={R} strokeWidth="1.300" /><path d="M1.500 1v9.500H17" fill="none" stroke={N} /><path d="M4 18v-5h4M4 15.500h3M11 13v4.500h3.500V13z" fill="none" stroke={P} strokeWidth="1.300" /></>],
  ["갈퀴", <><path d="M2 13L12 3M5 15L16 4M9 16l8-8" stroke={N} /><path d="M4 7l9 8" stroke={R} /></>],
  ["회귀", <><path d="M2.500 3v13M6 3v13M9.500 3v13M13 3v13M16.500 3v13" stroke={P} /><path d="M1 13l5-4 3 2 4-5 4-1" fill="none" stroke={R} strokeWidth="1.500" /></>],
  ["갠 라인", <>{G}<path d="M5 16L17 3" stroke={P} strokeWidth="1.300" /></>],
  ["갠 그리드", <>{G}<path d="M6 9l8 7M10 7l7 6M6 15l8-8M9 17l8-8" stroke="#6d73b5" /></>],
];

function ToolStrip() {
  return (
    <aside className="flex w-[23px] shrink-0 flex-col bg-[#f2f2f4]">
      <button type="button" className={`h-[18px] shrink-0 border border-[#b5b5b5] bg-white text-[12px] leading-[16px] ${UI}`}>A</button>
      <div className="mt-[4px] flex flex-1 flex-col border-l border-t border-[#888] bg-linear-to-r from-[#f3f3f8] to-[#c9c9d6]">
        {tools.map(([name, art], i) => (
          <button key={name} type="button" aria-label={name} className={i === 6 ? "flex h-[20px] shrink-0 items-center justify-center bg-[#b9b9c0]" : "flex h-[20px] shrink-0 items-center justify-center"}>
            <svg width="18" height="18" viewBox="0 0 18 18" fill="none">{art}</svg>
          </button>
        ))}
        <button type="button" aria-label="더보기" className="mt-auto flex h-[17px] items-center justify-center border border-[#bbb] bg-[#efefef]"><Caret /></button>
      </div>
    </aside>
  );
}

/* ---------- chart footer ---------- */

const FB = "flex h-[17px] w-[18px] shrink-0 items-center justify-center";

function Magnifier({ children }: { children: React.ReactNode }) {
  return (
    <svg width="17" height="17" viewBox="0 0 17 17" fill="none">
      <circle cx="7" cy="7" r="5" fill="#f4f4f4" stroke="#555" strokeWidth="1.200" />
      <path d="M11 11l4 4.500" stroke="#777" strokeWidth="2.500" />
      {children}
    </svg>
  );
}

function ScrollRow() {
  return (
    <div className="flex h-[19px] shrink-0 items-center border-y border-[#777] bg-[#ebebeb] text-black">
      <button type="button" aria-label="왼쪽" className={`${FB} !w-[17px] border-r border-[#777] bg-[#f3f3f3]`}><svg width="5" height="8" viewBox="0 0 5 8"><path d="M5 0v8L0 4z" /></svg></button>
      <div className="flex h-[17px] min-w-0 flex-1 bg-[#efefef]"><div className="w-[71%] border-r border-[#888] bg-[#c6c6c6]" /></div>
      <button type="button" aria-label="오른쪽" className={`${FB} !w-[17px] border-x border-[#777] bg-[#f3f3f3]`}><svg width="5" height="8" viewBox="0 0 5 8"><path d="M0 0v8l5-4z" /></svg></button>
      <div className="mx-[4px] h-[17px] w-[95px] shrink-0">
        <input type="range" aria-label="확대 비율" min="0" max="100" defaultValue="31" className="block h-[11px] w-full appearance-none bg-[linear-gradient(#777,#777)] bg-[length:100%_1px] bg-[0_5px] bg-no-repeat [&::-webkit-slider-thumb]:h-[10px] [&::-webkit-slider-thumb]:w-[3px] [&::-webkit-slider-thumb]:appearance-none [&::-webkit-slider-thumb]:bg-[#888]" />
        <div className="h-[5px] w-full bg-[repeating-linear-gradient(90deg,#333_0_1px,transparent_1px_4px)]" />
      </div>
      <button type="button" aria-label="뒤로" className={`${FB} border-r border-[#888]`}><svg width="11" height="13" viewBox="0 0 11 13"><path d="M11 0v13L0 6.500z" fill="#222" /></svg></button>
      <button type="button" aria-label="정지" className={`${FB} border-r border-[#888]`}><svg width="11" height="11" viewBox="0 0 11 11"><path d="M0 0h11v11H0z" fill="#222" /></svg></button>
      <button type="button" aria-label="재생" className={`${FB} border-r border-[#888]`}><svg width="11" height="13" viewBox="0 0 11 13"><path d="M0 0v13l11-6.500z" fill="#222" /></svg></button>
      <button type="button" aria-label="확대" className={FB}><Magnifier><path d="M4.500 7h5M7 4.500v5" stroke="#000" strokeWidth="1.500" /></Magnifier></button>
      <button type="button" aria-label="축소" className={FB}><Magnifier><path d="M4.500 7h5" stroke="#000" strokeWidth="1.500" /></Magnifier></button>
      <button type="button" aria-label="자동" className={FB}><Magnifier><path d="M5 5h3.500v4.200M8.500 7H5.500v2.200h3" stroke="#000" strokeWidth="1.300" /></Magnifier></button>
      <button type="button" aria-label="도구" className={`${FB} border-r border-[#888]`}><svg width="16" height="16" viewBox="0 0 16 16"><path d="M2 2l3 3 2-1V1c3 0 4 3 3 5l5 6-2.500 3L7 9C4 10 1 8 1 4z" fill="#ccc" stroke="#666" /></svg></button>
      <button type="button" aria-label="차트 저장" className={`${FB} border-r border-[#888]`}><svg width="15" height="15" viewBox="0 0 15 15"><path d="M1 1h13v13H3l-2-2z" fill="#e6e6e6" stroke="#444" /><path d="M4 1v4h7V1" fill="none" stroke="#444" /><rect x="6.500" y="7.500" width="6" height="6" fill="#fff" stroke="#444" /><path d="M8 9l3 3m0-3l-3 3" stroke="#444" /></svg></button>
      <button type="button" aria-label="인쇄" className={FB}><svg width="15" height="15" viewBox="0 0 15 15"><path d="M1 3h12v8H1z" fill="#ddd" stroke="#555" /><path d="M3 8l3-3 3 3 4-5" fill="none" stroke="#333" /><rect x="6" y="9" width="9" height="5" fill="#444" /><circle cx="10" cy="11" r="2" fill="#ccc" /></svg></button>
    </div>
  );
}

function ChartTabs() {
  const tabs: [string, string][] = [
    ["1 - 삼성전자[주]", "w-[105px]"], ["2 - 대원제약[일]", "w-[107px]"], ["3 - 부국철강[일]", "w-[107px]"], ["4 - 윈하이텍[일]", "w-[107px]"],
    ["5 - 동운아나텍[일]", "w-[119px]"], ["6 - 한글과컴퓨터[일]", "w-[131px]"], ["7 - 지엔씨에너지[일]", "w-[130px]"], ["8 - 윈하이텍[일]", "w-[106px]"], ["9 - 러셀[일]", "w-[84px]"],
  ];
  return (
    <nav className={`flex h-[19px] shrink-0 border-b-2 border-[#888] bg-[#ededed] pl-[2px] text-[13px] leading-[16px] ${KR}`}>
      {tabs.map(([t, w], i) => (
        <button key={t} type="button" className={`${w} ${i === 0 ? "border-l-2 border-t-2 bg-[#f7f7f7]" : "border-t"} flex shrink-0 items-center justify-center whitespace-nowrap border-r border-[#666]`}>
          {t}
        </button>
      ))}
    </nav>
  );
}

export default function App() {
  const menu = ["관심종목", "현재가창", "주식호가", "차트", "종합차트", "주식주문", "체결확인", "잔고확인", "투자정보", "종합뉴스", "조건검색", "차트분석", "순위분석", "업종지수", "예탁증권", "시장종합"];
  const ticker = ["삼성전자", "카카오", "동운아나텍", "동성", "애엔에프", "경남제약", "98", "러셀", "남문각", "교각오혜택증탁"];
  return (
    <div className={`flex h-screen min-h-[669px] w-full overflow-hidden bg-black ${KR}`}>
      <div className="w-[7px] shrink-0 bg-linear-to-r from-black from-60% to-[#333]" />
      <div className="flex min-w-0 flex-1 flex-col bg-[#e3e2e9]">
        <div className="flex h-[7px] shrink-0 overflow-hidden border-b border-[#666] bg-[#d6d6d6] pl-[6px] text-[12px] leading-[14px]">
          {menu.map((t, i) => (
            <span key={t} className={`flex w-[87px] shrink-0 items-end justify-center border-r-2 border-[#ddd] ${i === 11 ? "bg-[#3a3a3a] text-white" : "bg-linear-to-r from-[#999] to-[#bbb] text-[#222]"}`}>
              <span className="shrink-0">{t}</span>
            </span>
          ))}
          <span className="ml-auto mr-[8px] h-[3px] w-[16px] rounded-b bg-[#555]" />
        </div>
        <RowOne />
        <RowTwo />
        <div className="mt-[2px] flex min-h-0 flex-1">
          <Sidebar />
          <div className="w-[4px] shrink-0 bg-[#7b8894]" />
          <main className="flex min-w-0 flex-1 flex-col">
            <header className="flex h-[17px] shrink-0 items-center border-b border-[#aaa] bg-[#cdc9e3] text-[15px] leading-[16px] font-medium text-[#333]">
              <input type="checkbox" aria-label="선택" className="h-[12px] w-[12px] appearance-none border border-[#bbb] bg-white" />
              <h1 className="ml-[7px]">삼성전자</h1>
              <span className="ml-auto mr-[4px]">(주) [1/9]</span>
              <button type="button" aria-label="최대화" className="flex h-[15px] w-[17px] items-center justify-center border-b border-r border-[#777] bg-[#dde6f6]"><svg width="12" height="10" viewBox="0 0 12 10"><rect x=".5" y=".5" width="11" height="9" fill="#fff" stroke="#2450b0" /><path d="M0 2h12" stroke="#2450b0" strokeWidth="3" /></svg></button>
              <button type="button" aria-label="닫기" className="ml-px flex h-[15px] w-[17px] items-center justify-center border-b border-r border-[#777] bg-[#eee]"><svg width="9" height="9" viewBox="0 0 9 9"><path d="M1 1l7 7m0-7L1 8" stroke="#b02828" strokeWidth="1.600" /></svg></button>
            </header>
            <div className="min-h-0 flex-1 bg-white"><Chart /></div>
            <ScrollRow />
            <ChartTabs />
          </main>
          <ToolStrip />
        </div>
        <footer className="flex h-[7px] shrink-0 overflow-hidden border-t border-[#888] bg-[#cfcfcf] text-[12px] leading-[14px] text-[#222]">
          <span className="ml-[3px] mt-[2px] flex h-[12px] w-[99px] shrink-0 border border-[#333] bg-white pl-[10px]"><span className="flex-1 border-r border-[#333]">일목목록</span><span className="w-[16px]" /></span>
          <span className="ml-[6px] flex">
            {ticker.map((t) => (
              <span key={t} className="w-[128px] shrink-0">{t}</span>
            ))}
          </span>
        </footer>
      </div>
      <div className="w-[7px] shrink-0 border-l border-[#444] bg-black" />
    </div>
  );
}
